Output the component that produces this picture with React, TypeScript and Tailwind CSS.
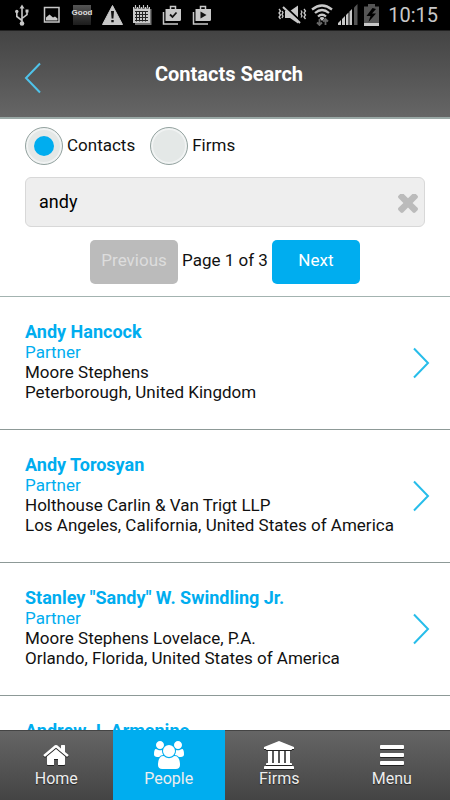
import { useState } from 'react';

interface Contact {
  name: string;
  role?: string;
  firm?: string;
  location?: string;
}

const contacts: Contact[] = [
  { name: 'Andy Hancock', role: 'Partner', firm: 'Moore Stephens', location: 'Peterborough, United Kingdom' },
  {
    name: 'Andy Torosyan',
    role: 'Partner',
    firm: 'Holthouse Carlin & Van Trigt LLP',
    location: 'Los Angeles, California, United States of America',
  },
  {
    name: 'Stanley "Sandy" W. Swindling Jr.',
    role: 'Partner',
    firm: 'Moore Stephens Lovelace, P.A.',
    location: 'Orlando, Florida, United States of America',
  },
  { name: 'Andrew J. Armanino' },
];

const tabs = [
  {
    label: 'Home',
    viewBox: '0 0 1792 1792',
    path: 'M1472 992v480q0 26-19 45t-45 19h-384v-384h-256v384h-384q-26 0-45-19t-19-45v-480q0-1 .5-3t.5-3l575-474 575 474q1 2 1 6zm223-69l-62 74q-8 9-21 11h-3q-13 0-21-7l-692-577-692 577q-12 8-24 7-13-2-21-11l-62-74q-8-10-7-23.5t11-21.5l719-599q32-26 76-26t76 26l244 204v-195q0-14 9-23t23-9h192q14 0 23 9t9 23v408l219 182q10 8 11 21.5t-7 23.5z',
  },
  {
    label: 'People',
    viewBox: '0 0 1920 1792',
    path: 'M593 896q-162 5-265 128h-134q-82 0-138-40.5t-56-118.5q0-353 124-353 6 0 43.5 21t97.5 42.5 119 21.5q67 0 133-23-5 37-5 66 0 139 81 256zm1071 637q0 120-73 189.5t-194 69.5h-874q-121 0-194-69.5t-73-189.5q0-53 3.5-103.5t14-109 26.5-108.5 43-97.5 62-81 85.5-53.5 111.5-20q10 0 43 21.5t73 48 107 48 135 21.5 135-21.5 107-48 73-48 43-21.5q61 0 111.5 20t85.5 53.5 62 81 43 97.5 26.5 108.5 14 109 3.5 103.5zm-1024-1277q0 106-75 181t-181 75-181-75-75-181 75-181 181-75 181 75 75 181zm704 384q0 159-112.5 271.5t-271.5 112.5-271.5-112.5-112.5-271.5 112.5-271.5 271.5-112.5 271.5 112.5 112.5 271.5zm576 225q0 78-56 118.5t-138 40.5h-134q-103-123-265-128 81-117 81-256 0-29-5-66 66 23 133 23 59 0 119-21.5t97.5-42.5 43.5-21q124 0 124 353zm-128-609q0 106-75 181t-181 75-181-75-75-181 75-181 181-75 181 75 75 181z',
  },
  {
    label: 'Firms',
    viewBox: '0 0 1920 1792',
    path: 'M960 0l960 384v128h-128q0 26-20.5 45t-48.5 19h-1526q-28 0-48.5-19t-20.5-45h-128v-128zm-704 640h256v768h128v-768h256v768h128v-768h256v768h128v-768h256v768h59q28 0 48.5 19t20.5 45v64h-1664v-64q0-26 20.5-45t48.5-19h59v-768zm1595 960q28 0 48.5 19t20.5 45v128h-1920v-128q0-26 20.5-45t48.5-19h1782z',
  },
  {
    label: 'Menu',
    viewBox: '0 0 1792 1792',
    path: 'M1664 1344v128q0 26-19 45t-45 19h-1408q-26 0-45-19t-19-45v-128q0-26 19-45t45-19h1408q26 0 45 19t19 45zm0-512v128q0 26-19 45t-45 19h-1408q-26 0-45-19t-19-45v-128q0-26 19-45t45-19h1408q26 0 45 19t19 45zm0-512v128q0 26-19 45t-45 19h-1408q-26 0-45-19t-19-45v-128q0-26 19-45t45-19h1408q26 0 45 19t19 45z',
  },
];

const StatusBar = () => (
  <div className="flex h-[31px] shrink-0 items-center justify-between border-b border-[#222] bg-black pr-3 pl-[11px] text-[#c8c8c8]">
    <div className="flex items-center gap-2">
      {/* usb */}
      <svg className="size-[22px]" viewBox="0 0 22 22" fill="none" stroke="currentColor" strokeWidth="1.6">
        <path d="M11 3v16M11 16.500l-5.200-4V8M11 14.500l5-4V7" />
        <path d="M8.500 4.500L11 .500l2.500 4z" fill="currentColor" stroke="none" />
        <circle cx="11" cy="19.500" r="2.300" fill="currentColor" stroke="none" />
        <circle cx="5.800" cy="7.500" r="1.700" fill="currentColor" stroke="none" />
        <path d="M14.500 5.500h3v3h-3z" fill="currentColor" stroke="none" />
      </svg>
      {/* gallery */}
      <svg className="size-[22px]" viewBox="0 0 22 22">
        <path d="M3.500 3.500h14.500v14.500H3.500z" fill="none" stroke="currentColor" strokeWidth="1.500" />
        <path d="M5 16.500v-3l3.500-3 3.500 3 2-1 2.500 2v2z" fill="currentColor" />
      </svg>
      <span className="flex h-5 w-[22px] justify-center border-x-2 border-black bg-linear-to-b from-[#555] to-[#1c1c1c] pt-1 font-['Liberation_Sans'] text-[8px] leading-[8px] font-bold text-[#ddd]">
        Good
      </span>
      {/* warning */}
      <svg className="size-[22px]" viewBox="0 0 22 22">
        <path d="M11.500 1.500L21.500 20.500h-20z" fill="currentColor" stroke="currentColor" strokeLinejoin="round" />
        <path d="M10 7h3l-.6 7.500h-1.800zM10.300 16h2.400v2.300h-2.400z" fill="#111" />
      </svg>
      {/* calendar */}
      <svg className="size-[22px]" viewBox="0 0 22 22">
        <path d="M4 5h16.500v16H4z" fill="#777" />
        <path d="M2 3h17v16H2z" fill="currentColor" />
        <path d="M4 7.500h13M4 10.500h13M4 13.500h13M4 16.500h13M5.500 7v10.500M8.500 7v10.500M11.500 7v10.500M14.500 7v10.500" stroke="#222" />
        <path d="M4.500 1v3.500M8.500 1v3.500M12.500 1v3.500M16.500 1v3.500" stroke="#111" strokeWidth="2.500" />
        <path d="M4.500 1v3M8.500 1v3M12.500 1v3M16.500 1v3" stroke="currentColor" />
      </svg>
      {/* store updates */}
      <svg className="size-[22px]" viewBox="0 0 22 22" fill="none" stroke="currentColor" strokeWidth="1.500">
        <path d="M2.500 8v12H17" />
        <path d="M9.500 5V2.500h5V5" />
        <path d="M4.500 5H20v10.500q0 1.500-1.500 1.500H4.500z" fill="currentColor" stroke="none" />
        <path d="M9 10.500l2.500 2.500 4-4.500" stroke="#111" strokeWidth="1.800" />
      </svg>
      {/* store */}
      <svg className="size-[22px]" viewBox="0 0 22 22" fill="none" stroke="currentColor" strokeWidth="1.500">
        <path d="M2.500 8v12H17" />
        <path d="M9.500 5V2.500h5V5" />
        <path d="M4.500 5H20v10.500q0 1.500-1.500 1.500H4.500z" fill="currentColor" stroke="none" />
        <path d="M9.500 7.500l6 3.500-6 3.500z" fill="#111" stroke="none" />
      </svg>
    </div>

    <div className="flex items-center gap-1">
      {/* vibrate, sound off */}
      <svg className="h-[22px] w-[30px]" viewBox="0 0 30 22" fill="none" stroke="currentColor">
        <path d="M8 7h5l8-5.500v18L13 14H8z" fill="currentColor" stroke="none" />
        <path d="M7.500 2L24 17.500" stroke="#000" strokeWidth="2" />
        <path d="M6 3L23 19" strokeWidth="2" />
        <path d="M2 5l1.500 2L2 9l1.500 2L2 13l1.500 2M5 7l1 1.500L5 10.500 6 12 5 14M27 5l1.500 2L27 9l1.500 2-1.500 2 1.500 2M24 6.500L25 8l-1 2 1 2-1 1.500" strokeWidth="1.300" />
      </svg>
      {/* wifi */}
      <svg className="size-[22px]" viewBox="0 0 22 22" fill="none" stroke="currentColor">
        <path d="M1 5.500q10-8 20 0M4 9q7-6 14 0M7 12.500q4-3.500 8 0" strokeWidth="2.300" />
        <path d="M8.500 14q2.500-2 5 0L11 17z" fill="currentColor" stroke="none" />
        <path d="M8.500 15v6M6 18.500l2.500 2.500 2.500-2.500M14.500 21v-6M12 17.500l2.500-2.500 2.500 2.500" stroke="#666" strokeWidth="1.800" />
      </svg>
      {/* signal */}
      <svg className="size-[22px]" viewBox="0 0 22 22" fill="currentColor">
        <path d="M1 21v-2l3-3v5zM5 21v-6l3-3v9zM9 21v-10l2.500-2.500V21zM12.500 21V7.500L15 5v16z" />
        <path d="M17 21V3.500L20.500 0v21z" fill="#555" />
      </svg>
      {/* battery */}
      <svg className="h-[22px] w-[17px]" viewBox="0 0 17 22">
        <path d="M1 2.500h4V0h7v2.500h4V19H1z" fill="#555" />
        <path d="M1 19h15v3H1z" fill="currentColor" />
        <path d="M9.500 4L3.500 12h4l-2 6L13 9.500H9L13 5z" fill="#000" />
      </svg>
      <span className="ml-1 text-[20px] leading-5">10:15</span>
    </div>
  </div>
);

const ChevronRight = () => (
  <svg className="h-8 w-[18px] shrink-0" viewBox="0 0 18 32" fill="none" stroke="#27bdea" strokeWidth="2">
    <path d="M2 1.500L16 16 2 30.500" />
  </svg>
);

export default function App() {
  const [kind, setKind] = useState('Contacts');
  const [query, setQuery] = useState('andy');

  return (
    <div className="flex h-screen flex-col overflow-hidden bg-white font-[Roboto,sans-serif] text-[17px] leading-5 text-[#111]">
      <StatusBar />

      <header className="grid h-[88px] shrink-0 grid-cols-[1fr_auto_1fr] items-center border-b-2 border-[#9aa9a6] bg-linear-to-b from-[#444] to-[#666] pr-4 pl-6">
        <button type="button" aria-label="Back" className="mt-2">
          <svg className="h-8 w-[18px]" viewBox="0 0 18 32" fill="none" stroke="#4fc3ea" strokeWidth="2">
            <path d="M16 1.500L2 16l14 14.500" />
          </svg>
        </button>
        <h1 className="text-[20px] font-bold text-white">Contacts Search</h1>
      </header>

      <main className="min-h-0 flex-1 overflow-hidden">
        <form className="border-b border-[#a3b3b0] px-[25px] pt-2 pb-3" onSubmit={(e) => e.preventDefault()}>
          <div className="flex gap-[15px]">
            {['Contacts', 'Firms'].map((option) => (
              <label key={option} className="flex items-center gap-1">
                <input
                  type="radio"
                  name="kind"
                  checked={kind === option}
                  onChange={() => setKind(option)}
                  className="grid size-[38px] appearance-none place-content-center rounded-full border border-[#94a3a0] bg-[#e4e8e7] inset-ring-2 inset-ring-[#f1f3f3] checked:before:size-5 checked:before:rounded-full checked:before:bg-[#00adef] checked:before:content-['']"
                />
                <span className="pb-0.5">{option}</span>
              </label>
            ))}
          </div>

          <div className="mt-3 flex h-[50px] items-center rounded-md border border-[#d8d8d8] bg-[#eee] pr-1.5 pl-[13px]">
            <input
              type="text"
              aria-label="Search"
              value={query}
              onChange={(e) => setQuery(e.target.value)}
              className="min-w-0 flex-1 bg-transparent text-[18px] text-black outline-none"
            />
            <button type="button" aria-label="Clear" className="mt-1" onClick={() => setQuery('')}>
              <svg className="size-5" viewBox="302 430 1188 1188" fill="#bbb">
                <path d="M1490 1322q0 40-28 68l-136 136q-28 28-68 28t-68-28l-294-294-294 294q-28 28-68 28t-68-28l-136-136q-28-28-28-68t28-68l294-294-294-294q-28-28-28-68t28-68l136-136q28-28 68-28t68 28l294 294 294-294q28-28 68-28t68 28l136 136q28 28 28 68t-28 68l-294 294 294 294q28 28 28 68z" />
              </svg>
            </button>
          </div>

          <div className="mt-[13px] flex items-center justify-center gap-1">
            <button type="button" disabled className="h-11 w-[88px] rounded-[5px] bg-[#bbb] pb-1 text-[#ddd]">
              Previous
            </button>
            <span className="pb-1">Page 1 of 3</span>
            <button type="button" className="h-11 w-[88px] rounded-[5px] bg-[#00adef] pb-1 text-white">
              Next
            </button>
          </div>
        </form>

        <ul>
          {contacts.map((contact) => (
            <li key={contact.name} className="border-b border-[#8d9997]">
              <a href="#" className="flex min-h-[132px] items-start justify-between pt-[25px] pr-5 pb-[27px] pl-[25px]">
                <div>
                  <p className="text-[18px] font-bold text-[#00adef]">{contact.name}</p>
                  <p className="text-[#00adef]">{contact.role}</p>
                  <p>{contact.firm}</p>
                  <p>{contact.location}</p>
                </div>
                <span className="-ml-4 self-center pt-0.5">
                  <ChevronRight />
                </span>
              </a>
            </li>
          ))}
        </ul>
      </main>

      <nav className="grid h-[70px] shrink-0 grid-cols-[28fr_28fr_27fr_29fr] bg-linear-to-b from-[#666] to-[#444]">
        {tabs.map((tab) => (
          <a
            key={tab.label}
            href="#"
            className={`flex flex-col items-center border-t pt-2.5 text-[16px] text-[#eee] ${tab.label === 'People' ? 'border-[#00adef] bg-[#00adef]' : 'border-[#444] text-shadow-[0_1px_1px_#222]'}`}
          >
            <svg
              className={`h-7 w-[30px] ${tab.label === 'People' ? '' : 'drop-shadow-[0_1px_0_#222]'}`}
              viewBox={tab.viewBox}
              fill="#fff"
            >
              <path d={tab.path} />
            </svg>
            {tab.label}
          </a>
        ))}
      </nav>
    </div>
  );
}
